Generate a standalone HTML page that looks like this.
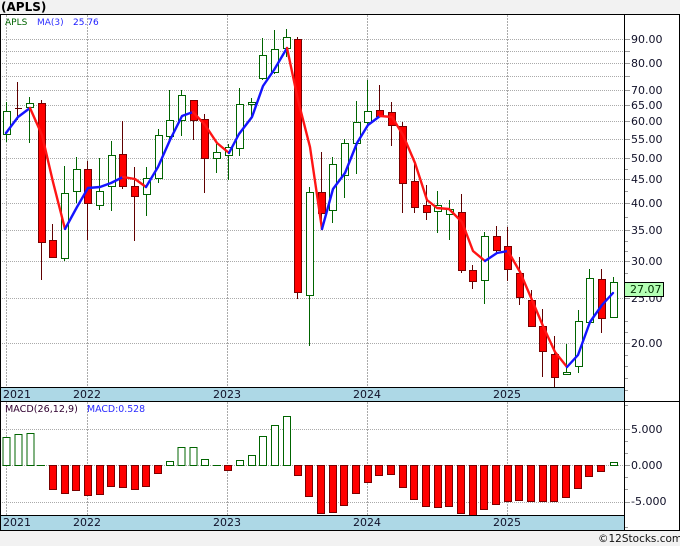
<!DOCTYPE html>
<html>
<head>
<meta charset="utf-8">
<title>APLS</title>
<style>
html,body{margin:0;padding:0;background:#f2f2f2;width:680px;height:546px;overflow:hidden}
svg{display:block}
text{font-family:"DejaVu Sans","Liberation Sans",sans-serif;font-size:11px;fill:#101028}
.s{font-size:9px}
</style>
</head>
<body>
<svg width="680" height="546" viewBox="0 0 680 546" xmlns="http://www.w3.org/2000/svg">
<rect width="680" height="546" fill="#f2f2f2"/>
<rect x="0" y="14" width="680" height="516" fill="#fff"/>
<text x="1" y="11" style="font-weight:bold;font-size:12px;fill:#000">(APLS)</text>

<g shape-rendering="crispEdges" fill="none">
<path stroke="#aaaaaa" stroke-dasharray="1 1" d="M2 39.5H624M2 51.5H624M2 63.5H624M2 76.5H624M2 90.5H624M2 105.5H624M2 121.5H624M2 139.5H624M2 158.5H624M2 179.5H624M2 203.5H624M2 230.5H624M2 261.5H624M2 298.5H624M2 343.5H624M2 429.5H624M2 465.5H624M2 502.5H624"/>
<path stroke="#aaaaaa" stroke-dasharray="2 1" d="M6.5 15V387M87.5 15V387M227.5 15V387M367.5 15V387M507.5 15V387M6.5 402V515M87.5 402V515M227.5 402V515M367.5 402V515M507.5 402V515"/>

<!-- wicks -->
<path stroke="#006400" d="M6.5 102V142M29.5 97V143M64.5 166V261M76.5 157V203M99.5 158V210M111.5 141V211M146.5 167V216M158.5 129V183M169.5 90V143M181.5 90V136M216.5 144V173M228.5 144V180M239.5 88V156M251.5 98V118M262.5 38V80M274.5 30V74M286.5 29V57M309.5 187V346M332.5 157V223M344.5 139V198M356.5 101V174M367.5 80V127M437.5 191V233M449.5 200V240M484.5 232V304M566.5 344V374M578.5 310V373M589.5 269V322M613.5 277V318"/>
<path stroke="#600000" d="M17.5 82V120M15 108.5H22M41.5 100V280M52.5 224V258M87.5 161V240M122.5 121V189M134.5 167V241M193.5 100V140M204.5 114V193M297.5 37V299M321.5 152V229M379.5 85V117M391.5 102V146M402.5 122V213M414.5 162V213M426.5 185V220M461.5 194V273M472.5 265V289M496.5 226V253M507.5 227V281M519.5 257V305M531.5 290V326M542.5 309V377M554.5 336V387M601.5 269V333"/>

<!-- green bodies -->
<path fill="#fff" stroke="#006400" d="M3.5 111.5h7V134.5h-7zM26.5 103.5h7V107.5h-7zM61.5 193.5h7V258.5h-7zM73.5 169.5h7V191.5h-7zM96.5 191.5h7V205.5h-7zM108.5 155.5h7V186.5h-7zM143.5 178.5h7V194.5h-7zM155.5 135.5h7V178.5h-7zM166.5 120.5h7V136.5h-7zM178.5 95.5h7V120.5h-7zM213.5 152.5h7V158.5h-7zM225.5 147.5h7V155.5h-7zM236.5 104.5h7V148.5h-7zM248.5 102.5h7V104.5h-7zM259.5 55.5h7V78.5h-7zM271.5 49.5h7V72.5h-7zM283.5 37.5h7V48.5h-7zM306.5 192.5h7V295.5h-7zM329.5 164.5h7V210.5h-7zM341.5 143.5h7V175.5h-7zM353.5 122.5h7V143.5h-7zM364.5 111.5h7V122.5h-7zM434.5 205.5h7V211.5h-7zM446.5 209.5h7V214.5h-7zM481.5 236.5h7V280.5h-7zM563.5 372.5h7V374.5h-7zM575.5 321.5h7V366.5h-7zM586.5 278.5h7V322.5h-7zM610.5 282.5h7V317.5h-7z"/>
<!-- red bodies -->
<path fill="#ff0000" stroke="#7a0000" d="M38.5 103.5h7V242.5h-7zM49.5 240.5h7V257.5h-7zM84.5 169.5h7V203.5h-7zM119.5 154.5h7V186.5h-7zM131.5 186.5h7V196.5h-7zM190.5 100.5h7V120.5h-7zM201.5 119.5h7V158.5h-7zM294.5 39.5h7V292.5h-7zM318.5 192.5h7V213.5h-7zM376.5 110.5h7V116.5h-7zM388.5 112.5h7V125.5h-7zM399.5 126.5h7V183.5h-7zM411.5 181.5h7V207.5h-7zM423.5 205.5h7V212.5h-7zM458.5 212.5h7V270.5h-7zM469.5 270.5h7V281.5h-7zM493.5 236.5h7V250.5h-7zM504.5 246.5h7V269.5h-7zM516.5 273.5h7V297.5h-7zM528.5 300.5h7V326.5h-7zM539.5 326.5h7V351.5h-7zM551.5 354.5h7V377.5h-7zM598.5 279.5h7V318.5h-7z"/>

<!-- MACD bars green -->
<path fill="#fff" stroke="#006400" d="M3 437.5h7V465.5h-7zM15 434.5h7V465.5h-7zM27 433.5h7V465.5h-7zM166.5 461.5h7V465.5h-7zM178 447.5h7V465.5h-7zM190 447.5h7V465.5h-7zM201.5 459.5h7V465.5h-7zM236.5 460.5h7V465.5h-7zM248.5 455.5h7V465.5h-7zM259.5 436.5h7V465.5h-7zM271.5 425.5h7V465.5h-7zM283.5 416.5h7V465.5h-7zM610.5 462.5h7V465.5h-7z"/>
<path stroke="#006400" d="M37 465.5H45M213 465.5H221"/>
<!-- MACD bars red -->
<path fill="#ff0000" stroke="#7a0000" d="M49.5 465.5h7V489.5h-7zM61.5 465.5h7V493.5h-7zM72.5 465.5h7V490.5h-7zM84.5 465.5h7V495.5h-7zM96.5 465.5h7V494.5h-7zM107.5 465.5h7V486.5h-7zM119.5 465.5h7V487.5h-7zM131.5 465.5h7V489.5h-7zM142.5 465.5h7V486.5h-7zM154.5 465.5h7V473.5h-7zM224.5 465.5h7V470.5h-7zM294.5 465.5h7V475.5h-7zM305.5 465.5h7V496.5h-7zM317.5 465.5h7V513.5h-7zM329.5 465.5h7V512.5h-7zM340.5 465.5h7V505.5h-7zM352.5 465.5h7V493.5h-7zM364.5 465.5h7V482.5h-7zM375.5 465.5h7V475.5h-7zM387.5 465.5h7V474.5h-7zM399.5 465.5h7V487.5h-7zM410.5 465.5h7V499.5h-7zM422.5 465.5h7V506.5h-7zM434.5 465.5h7V507.5h-7zM445.5 465.5h7V506.5h-7zM457.5 465.5h7V513.5h-7zM469.5 465.5h7V515.5h-7zM480.5 465.5h7V509.5h-7zM492.5 465.5h7V504.5h-7zM504.5 465.5h7V501.5h-7zM515.5 465.5h7V500.5h-7zM527.5 465.5h7V501.5h-7zM539.5 465.5h7V501.5h-7zM550.5 465.5h7V501.5h-7zM562.5 465.5h7V497.5h-7zM574.5 465.5h7V488.5h-7zM585.5 465.5h7V476.5h-7zM597.5 465.5h7V471.5h-7z"/>
</g>

<!-- MA line -->
<g fill="none" stroke-width="2.4" stroke-linejoin="round" stroke-linecap="round">
<polyline stroke="#1414ff" points="6,133 18,117 30,108"/>
<polyline stroke="#ff1414" points="30,108 42,135 53,182 65,229"/>
<polyline stroke="#1414ff" points="65,229 77,207 88,188 100,187 111,183 123,177"/>
<polyline stroke="#ff1414" points="123,177 135,179 146,187"/>
<polyline stroke="#1414ff" points="146,187 158,167 170,140 182,116 193,112"/>
<polyline stroke="#ff1414" points="193,112 205,125 217,143 229,153"/>
<polyline stroke="#1414ff" points="229,153 239,134 252,117 263,86 274,70 287,48"/>
<polyline stroke="#ff1414" points="287,48 298,100 310,147 322,229"/>
<polyline stroke="#1414ff" points="322,229 333,189 345,173 357,143 368,125 380,116"/>
<polyline stroke="#ff1414" points="380,116 392,117 403,135 415,163 427,200 437,208 449,209 462,222 473,251 485,261"/>
<polyline stroke="#1414ff" points="485,261 497,253 508,251"/>
<polyline stroke="#ff1414" points="508,251 520,272 532,300 543,326 555,352 567,367"/>
<polyline stroke="#1414ff" points="567,367 578,355 590,322 602,305 613,293"/>
</g>

<!-- blue date bars and frame -->
<g shape-rendering="crispEdges">
<rect x="1" y="387" width="623" height="14" fill="#add8e6"/>
<rect x="1" y="515" width="623" height="15" fill="#add8e6"/>
<path fill="none" stroke="#999" d="M625 39.5H630M625 51.5H630M625 63.5H630M625 76.5H630M625 90.5H630M625 105.5H630M625 121.5H630M625 139.5H630M625 158.5H630M625 179.5H630M625 203.5H630M625 230.5H630M625 261.5H630M625 298.5H630M625 343.5H630M625 429.5H630M625 465.5H630M625 502.5H630M625 169.5H628M625 191.5H628M625 217.5H628M625 241.5H628M625 251.5H628M625 273.5H628M625 321.5H628M625 332.5H628M625 355.5H628M625 366.5H628M625 378.5H628M625 390.5H628M625 405.5H628M625 441.5H628M625 453.5H628M625 477.5H628M625 489.5H628M625 527.5H628"/>
<path fill="none" stroke="#000" d="M0 14.5H680M0.5 14V530M624.5 14V530M679.5 14V530M0 387.5H624M0 401.5H680M0 515.5H624M0 530.5H680"/>
</g>

<!-- legends -->
<text x="5" y="25" class="s" style="fill:#006400">APLS</text>
<text x="37" y="25" class="s" style="fill:#3030ff">MA(3)</text>
<text x="73" y="25" class="s" style="fill:#1a1aff">25.76</text>
<text x="5" y="412" style="font-size:9.6px;fill:#300030">MACD(26,12,9)</text>
<text x="87" y="412" style="font-size:9.4px;fill:#2a2aff">MACD:0.528</text>

<!-- axis labels -->
<text x="631" y="43">90.00</text>
<text x="631" y="67">80.00</text>
<text x="631" y="94">70.00</text>
<text x="631" y="109">65.00</text>
<text x="631" y="125">60.00</text>
<text x="631" y="143">55.00</text>
<text x="631" y="162">50.00</text>
<text x="631" y="183">45.00</text>
<text x="631" y="207">40.00</text>
<text x="631" y="234">35.00</text>
<text x="631" y="265">30.00</text>
<text x="631" y="302">25.00</text>
<text x="631" y="347">20.00</text>
<text x="631" y="433">5.000</text>
<text x="631" y="469">0.000</text>
<text x="631" y="505">-5.000</text>

<rect x="624.5" y="282.5" width="39" height="14" fill="#b4ffb4" stroke="#000" shape-rendering="crispEdges"/>
<text x="630" y="293" style="fill:#003000">27.07</text>

<!-- time labels -->
<text x="3" y="398">2021</text>
<text x="73" y="398">2022</text>
<text x="213" y="398">2023</text>
<text x="353" y="398">2024</text>
<text x="493" y="398">2025</text>
<text x="3" y="526">2021</text>
<text x="73" y="526">2022</text>
<text x="213" y="526">2023</text>
<text x="353" y="526">2024</text>
<text x="493" y="526">2025</text>

<text x="598" y="542" style="font-size:10.5px;fill:#101010">©12Stocks.com</text>
</svg>
</body>
</html>
